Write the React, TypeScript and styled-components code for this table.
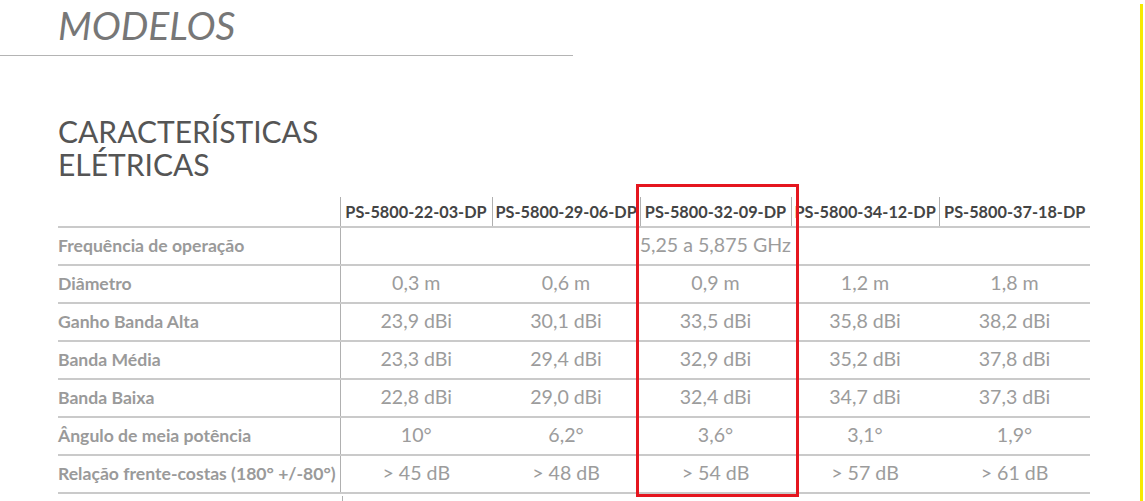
import styled, { createGlobalStyle } from 'styled-components';

const GlobalStyle = createGlobalStyle`
  html, body {
    margin: 0;
    padding: 0;
    background: #fff;
  }
  body {
    font-family: Lato, "Open Sans", sans-serif;
    overflow: hidden;
  }
`;

const models = [
  'PS-5800-22-03-DP',
  'PS-5800-29-06-DP',
  'PS-5800-32-09-DP',
  'PS-5800-34-12-DP',
  'PS-5800-37-18-DP',
];

const rows: { label: string; values: string[] }[] = [
  { label: 'Diâmetro', values: ['0,3 m', '0,6 m', '0,9 m', '1,2 m', '1,8 m'] },
  { label: 'Ganho Banda Alta', values: ['23,9 dBi', '30,1 dBi', '33,5 dBi', '35,8 dBi', '38,2 dBi'] },
  { label: 'Banda Média', values: ['23,3 dBi', '29,4 dBi', '32,9 dBi', '35,2 dBi', '37,8 dBi'] },
  { label: 'Banda Baixa', values: ['22,8 dBi', '29,0 dBi', '32,4 dBi', '34,7 dBi', '37,3 dBi'] },
  { label: 'Ângulo de meia potência', values: ['10°', '6,2°', '3,6°', '3,1°', '1,9°'] },
  { label: 'Relação frente-costas (180° +/-80°)', values: ['> 45 dB', '> 48 dB', '> 54 dB', '> 57 dB', '> 61 dB'] },
];

const colWidths = [152, 148, 151, 148, 151];

const Page = styled.div`
  display: flex;
  width: 1145px;
  height: 501px;
`;

const Main = styled.main`
  flex: 1;
  min-width: 0;
`;

const EdgeMark = styled.div`
  width: 3px;
  margin: 4px 2px 0 0;
  background: #f7ea00;
`;

const Heading = styled.h1`
  margin: 6px 0 0;
  padding-left: 58px;
  font-size: 39px;
  line-height: 39px;
  font-weight: 400;
  font-style: italic;
  color: #777;
`;

const Rule = styled.hr`
  margin: 10px 0 0;
  width: 573px;
  height: 1px;
  border: 0;
  background: #b4b4b4;
`;

const Title = styled.h2`
  margin: 59px 0 0;
  padding-left: 58px;
  font-size: 30px;
  line-height: 33px;
  font-weight: 400;
  color: #555;
`;

const TableWrap = styled.div`
  position: relative;
  margin: 16px 0 0 58px;
  width: 1032px;
`;

const Table = styled.table`
  border-collapse: collapse;
  table-layout: fixed;
  width: 1032px;
`;

const HeadCell = styled.th<{ $first?: boolean }>`
  height: 30px;
  padding: 0 3px;
  box-sizing: border-box;
  border-left: ${(p) => (p.$first ? '0' : '1px solid #b0b0b0')};
  border-bottom: 2px solid #cacaca;
  font-size: 16.3px;
  font-weight: 700;
  color: #444;
  text-align: center;
  white-space: nowrap;
  overflow: visible;
`;

const LabelCell = styled.td`
  height: 38px;
  padding: 0 0 2px;
  box-sizing: border-box;
  border-bottom: 2px solid #cacaca;
  border-right: 1px solid #b0b0b0;
  font-size: 17.6px;
  font-weight: 700;
  color: #9a9a9a;
  white-space: nowrap;
`;

const ValueCell = styled.td`
  height: 38px;
  padding: 0 0 3px;
  box-sizing: border-box;
  border-bottom: 2px solid #cacaca;
  font-size: 19.6px;
  color: #9c9c9c;
  text-align: center;
  white-space: nowrap;
`;

const Highlight = styled.div`
  position: absolute;
  left: 578px;
  top: -13px;
  width: 163px;
  height: 313px;
  box-sizing: border-box;
  border: 3px solid #e5161f;
  pointer-events: none;
`;

const NextTable = styled.div`
  margin: 2px 0 0 342px;
  width: 1px;
  height: 20px;
  background: #b0b0b0;
`;

export default function App() {
  return (
    <Page>
      <GlobalStyle />
      <Main>
        <Heading>MODELOS</Heading>
        <Rule />
        <Title>
          CARACTERÍSTICAS
          <br />
          ELÉTRICAS
        </Title>
        <TableWrap>
          <Table>
            <colgroup>
              <col style={{ width: 282 }} />
              {colWidths.map((w, i) => (
                <col key={i} style={{ width: w }} />
              ))}
            </colgroup>
            <thead>
              <tr>
                <HeadCell $first />
                {models.map((m) => (
                  <HeadCell key={m}>{m}</HeadCell>
                ))}
              </tr>
            </thead>
            <tbody>
              <tr>
                <LabelCell>Frequência de operação</LabelCell>
                <ValueCell colSpan={5}>5,25 a 5,875 GHz</ValueCell>
              </tr>
              {rows.map((r) => (
                <tr key={r.label}>
                  <LabelCell>{r.label}</LabelCell>
                  {r.values.map((v, i) => (
                    <ValueCell key={i}>{v}</ValueCell>
                  ))}
                </tr>
              ))}
            </tbody>
          </Table>
          <Highlight />
        </TableWrap>
        <NextTable />
      </Main>
      <EdgeMark />
    </Page>
  );
}
